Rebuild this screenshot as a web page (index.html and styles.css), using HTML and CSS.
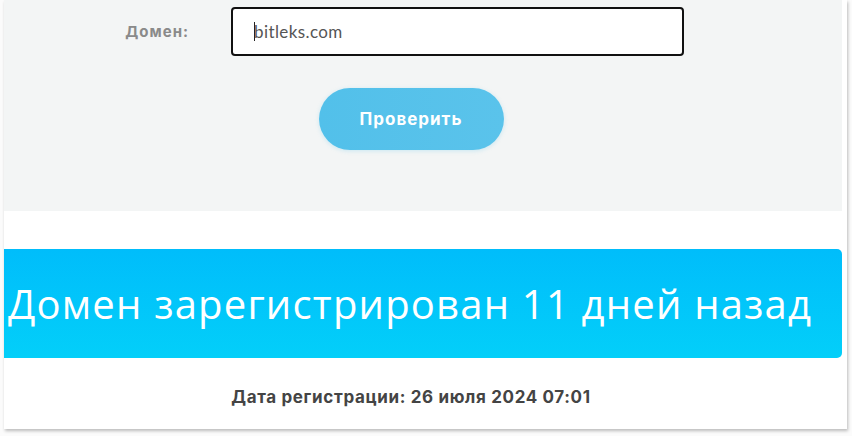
FILE: index.html
```html
<!DOCTYPE html>
<html lang="ru">
<head>
<meta charset="utf-8">
<link rel="stylesheet" href="styles.css">
</head>
<body>
<div class="card">
  <div class="panel">
    <div class="row">
      <label class="label">Домен:</label>
      <div class="input"><span class="caret"></span>bitleks.com</div>
    </div>
    <div class="btn-row">
      <button class="btn">Проверить</button>
    </div>
  </div>
  <div class="banner">Домен зарегистрирован 11 дней назад</div>
  <div class="date">Дата регистрации: 26 июля 2024 07:01</div>
</div>
</body>
</html>
```
FILE: styles.css
```css
html, body {
  margin: 0;
  padding: 0;
  background: #fbfbfb;
  width: 852px;
  height: 436px;
  overflow: hidden;
}
.card {
  margin-left: 4px;
  width: 843px;
  height: 429px;
  background: #fff;
  box-shadow: 1px 2px 3px rgba(0,0,0,0.25);
  padding-right: 5px;
  box-sizing: border-box;
  font-family: Inter, "Open Sans", sans-serif;
}
.panel {
  height: 211px;
  background: #f3f5f5;
  box-sizing: border-box;
  padding-top: 7px;
}
.row {
  display: flex;
  align-items: center;
  padding-left: 119px;
  gap: 42px;
}
.label {
  width: 66px;
  text-align: right;
  font-weight: 700;
  font-size: 15px;
  letter-spacing: 1px;
  color: #8a8a8a;
}
.input {
  width: 453px;
  height: 49px;
  box-sizing: border-box;
  border: 2px solid #111;
  border-radius: 4px;
  background: #fff;
  display: flex;
  align-items: center;
  padding-left: 21px;
  font-family: Lato, sans-serif;
  font-size: 17px;
  letter-spacing: 0.4px;
  color: #555;
}
.caret {
  display: inline-block;
  width: 1px;
  height: 19px;
  background: #222;
  margin-right: -1px;
}
.btn-row {
  display: flex;
  justify-content: center;
  padding-right: 24px;
  margin-top: 32px;
}
.btn {
  width: 185px;
  height: 62px;
  border: none;
  border-radius: 31px;
  background: linear-gradient(90deg, #52c0ea, #5ac3eb);
  color: #fff;
  font-family: Inter, sans-serif;
  font-weight: 700;
  font-size: 17px;
  letter-spacing: 1px;
  box-shadow: 0 1px 4px rgba(80,190,235,0.25);
}
.banner {
  margin-top: 38px;
  height: 109px;
  background: linear-gradient(#00bdfb, #03cff9);
  border-radius: 0 5px 5px 0;
  color: #fff;
  font-family: "Open Sans", sans-serif;
  font-size: 40px;
  letter-spacing: 1.2px;
  display: flex;
  align-items: center;
  padding-left: 4px;
}
.date {
  margin-top: 29px;
  text-align: center;
  padding-right: 24px;
  font-weight: 700;
  font-size: 17px;
  letter-spacing: 0.65px;
  color: #444;
}
```
